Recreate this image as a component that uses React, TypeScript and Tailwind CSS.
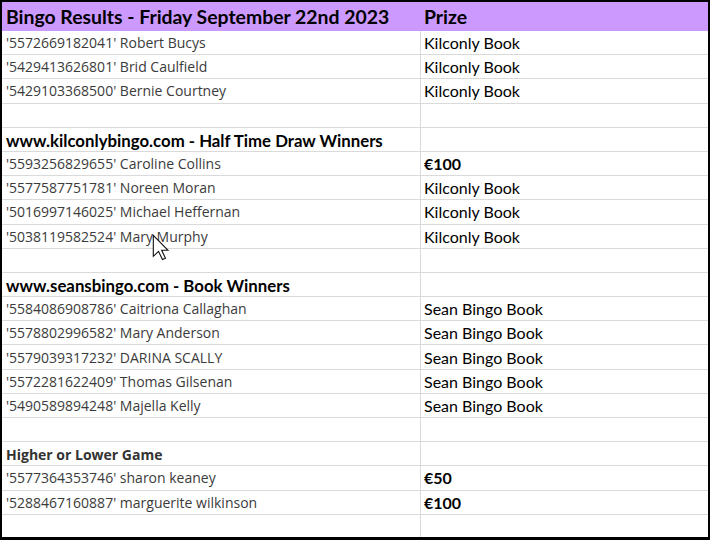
import React from 'react'

type Row = {
  name?: string
  prize?: string
  heading?: boolean
  gray?: boolean
  bold?: boolean
}

const rows: Row[] = [
  { name: "'5572669182041' Robert Bucys", prize: 'Kilconly Book' },
  { name: "'5429413626801' Brid Caulfield", prize: 'Kilconly Book' },
  { name: "'5429103368500' Bernie Courtney", prize: 'Kilconly Book' },
  {},
  { name: 'www.kilconlybingo.com - Half Time Draw Winners', heading: true },
  { name: "'5593256829655' Caroline Collins", prize: '€100', bold: true },
  { name: "'5577587751781' Noreen Moran", prize: 'Kilconly Book' },
  { name: "'5016997146025' Michael Heffernan", prize: 'Kilconly Book' },
  { name: "'5038119582524' Mary Murphy", prize: 'Kilconly Book' },
  {},
  { name: 'www.seansbingo.com - Book Winners', heading: true },
  { name: "'5584086908786' Caitriona Callaghan", prize: 'Sean Bingo Book' },
  { name: "'5578802996582' Mary Anderson", prize: 'Sean Bingo Book' },
  { name: "'5579039317232' DARINA SCALLY", prize: 'Sean Bingo Book' },
  { name: "'5572281622409' Thomas Gilsenan", prize: 'Sean Bingo Book' },
  { name: "'5490589894248' Majella Kelly", prize: 'Sean Bingo Book' },
  {},
  { name: 'Higher or Lower Game', heading: true, gray: true },
  { name: "'5577364353746' sharon keaney", prize: '€50', bold: true },
  { name: "'5288467160887' marguerite wilkinson", prize: '€100', bold: true },
  {},
]

// Calibri / Segoe UI stand-ins
const calibri = "font-['Lato','Liberation_Sans',sans-serif]"
const segoe = "font-['Open_Sans','Noto_Sans',sans-serif]"

function Cursor() {
  return (
    <svg
      className="absolute left-[150px] top-[232px]"
      width="17"
      height="27"
      viewBox="0 0 13 20.5"
    >
      <path
        d="M1 1 L1 17 L5 13.2 L8 19.5 L10.3 18.5 L7.4 12.4 L12.3 12.4 Z"
        fill="white"
        stroke="#111"
        strokeWidth="0.85"
        strokeLinejoin="miter"
      />
    </svg>
  )
}

export default function App() {
  return (
    <div className="relative w-[710px] h-[540px] overflow-hidden bg-white border-t-2 border-l-2 border-r-2 border-b-[3px] border-black">
      <div className="flex h-[29px] bg-[#cc99ff] text-black">
        <div className={`w-[419px] pl-[4px] pt-[1px] text-[19.4px] font-bold leading-[28px] whitespace-nowrap ${calibri}`}>
          Bingo Results - Friday September 22nd 2023
        </div>
        <div className={`flex-1 pl-[3px] pt-[1px] text-[19.4px] font-bold leading-[28px] ${calibri}`}>
          Prize
        </div>
      </div>
      {rows.map((r, i) => (
        <div key={i} className="flex h-[24.2px] border-b border-[#dadada]">
          <div
            className={`w-[419px] border-r border-[#dadada] pl-[4px] flex items-center whitespace-nowrap ${
              r.heading && !r.gray ? 'pt-[3px]' : r.gray ? 'pt-[1px]' : ''
            }`}
          >
            {r.heading ? (
              <span
                className={`font-bold ${
                  r.gray
                    ? `text-[#333] text-[14px] ${segoe}`
                    : `text-black text-[16.8px] ${calibri}`
                }`}
              >
                {r.name}
              </span>
            ) : (
              <span className={`text-[#3b3b3b] text-[14px] ${segoe}`}>{r.name}</span>
            )}
          </div>
          <div className="flex-1 pl-[3px] flex items-center pt-[1px]">
            {r.prize && (
              <span
                className={`text-black text-[16px] ${calibri} ${r.bold ? 'font-bold' : ''}`}
              >
                {r.prize}
              </span>
            )}
          </div>
        </div>
      ))}
      <Cursor />
    </div>
  )
}
